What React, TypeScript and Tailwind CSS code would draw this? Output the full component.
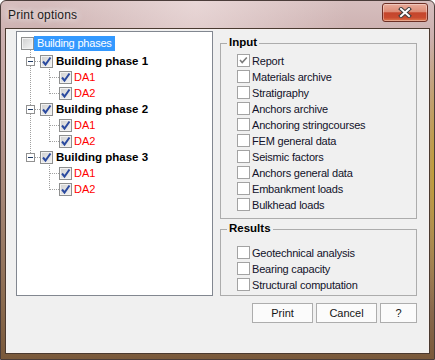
import React from "react";

function TreeCheck({ checked }: { checked: boolean }) {
  return (
    <span className="mt-[2px] flex h-[13px] w-[13px] shrink-0 items-center justify-center border border-[#8e8f8f] bg-[linear-gradient(135deg,#cfcfcf,#f5f5f5)] shadow-[inset_0_0_0_1px_#f2f2f2]">
      {checked && (
        <svg width="11" height="11" viewBox="0 0 11 11">
          <path d="M2 5.5 L4.5 8.5 L9.5 1.5" fill="none" stroke="#2b4a9f" strokeWidth="2" />
        </svg>
      )}
    </span>
  );
}

function Check({ checked }: { checked?: boolean }) {
  return (
    <span className="mt-[1px] flex h-[13px] w-[13px] shrink-0 items-center justify-center border border-[#a3a3a3] bg-white">
      {checked && (
        <svg width="11" height="11" viewBox="0 0 11 11">
          <path d="M2 5 L4.2 7.5 L8.8 2.5" fill="none" stroke="#7b7b7b" strokeWidth="1.6" />
        </svg>
      )}
    </span>
  );
}

function CheckRow({ label, checked }: { label: string; checked?: boolean }) {
  return (
    <div className="flex h-[16px] items-start">
      <Check checked={checked} />
      <span className="ml-[2px] whitespace-nowrap text-[11px] leading-[16px] tracking-[-0.2px] text-[#12122a]">{label}</span>
    </div>
  );
}

const phases = [29, 77, 125];

function Tree() {
  const dot = { stroke: "#a0a0a0", strokeDasharray: "1 1" };
  return (
    <div className="relative h-[265px] w-[197px] shrink-0 border border-[#828790] bg-white pt-[3px]">
      <svg className="absolute left-0 top-0" width="195" height="263" shapeRendering="crispEdges">
        <path d="M13.5 18 V125" {...dot} />
        {phases.map((c) => (
          <g key={c}>
            <path d={`M18 ${c + 0.5} H23`} {...dot} />
            <path d={`M32.5 ${c + 8} V${c + 33}`} {...dot} />
            <path d={`M33 ${c + 16.5} H42`} {...dot} />
            <path d={`M33 ${c + 32.5} H42`} {...dot} />
            <rect x="9.5" y={c - 3.5} width="8" height="8" fill="#ffffff" stroke="#919191" />
            <path d={`M11 ${c + 0.5} H16`} stroke="#1f3a63" />
          </g>
        ))}
      </svg>
      <div className="flex h-[16px] items-start pl-[4px]">
        <TreeCheck checked={false} />
        <span className="mt-[1px] h-[15px] whitespace-nowrap bg-[#3399ff] pl-[3px] pr-[3px] text-[11px] leading-[15px] tracking-[-0.2px] text-white">
          Building phases
        </span>
      </div>
      <div className="mt-[2px]">
        {[1, 2, 3].map((n) => (
          <div key={n}>
            <div className="flex h-[16px] items-start pl-[23px]">
              <TreeCheck checked />
              <span className="ml-[3px] whitespace-nowrap text-[11.5px] font-bold leading-[16px] text-black">
                Building phase {n}
              </span>
            </div>
            <div className="flex h-[16px] items-start pl-[42px]">
              <TreeCheck checked />
              <span className="ml-[2px] text-[11px] leading-[16px] text-[#ff0000]">DA1</span>
            </div>
            <div className="flex h-[16px] items-start pl-[42px]">
              <TreeCheck checked />
              <span className="ml-[2px] text-[11px] leading-[16px] text-[#ff0000]">DA2</span>
            </div>
          </div>
        ))}
      </div>
    </div>
  );
}

export default function App() {
  return (
    <div className="h-[360px] w-[435px] font-['Liberation_Sans',Arial,sans-serif]">
      <div className="flex h-[360px] w-[435px] flex-col rounded-t-[6px] border border-[#4b3d3a] bg-[radial-gradient(10px_140px_at_100%_48%,rgba(196,160,48,0.95),transparent),radial-gradient(ellipse_at_45%_0%,rgba(255,245,245,0.45),transparent_45%),linear-gradient(180deg,#d6bebe_0%,#cdb1b0_9%,#b99a94_35%,#a0816f_60%,#8a6a4e_85%,#7a593b_100%)]">
        <div className="flex h-[27px] shrink-0 items-start justify-between">
          <span className="ml-[7px] mt-[7px] whitespace-nowrap text-[12px] leading-[15px] tracking-[0.2px] text-[#1b1b1b] [text-shadow:0_0_6px_rgba(255,255,255,0.9),0_0_10px_rgba(255,255,255,0.6)]">
            Print options
          </span>
          <div className="mr-[6px] mt-[2px] flex h-[19px] w-[46px] items-center justify-center rounded-[3px] border border-[#6e2f25] bg-[linear-gradient(180deg,#e9ab9a_0%,#dd8c76_45%,#c4452c_52%,#c94b2f_80%,#e0794f_100%)] shadow-[inset_0_0_0_1px_rgba(255,255,255,0.35)]">
            <svg width="14" height="11" viewBox="0 0 14 11">
              <path d="M3 2 L11 9 M11 2 L3 9" stroke="#3c3c3c" strokeWidth="4" strokeLinecap="square" />
              <path d="M3 2 L11 9 M11 2 L3 9" stroke="#ffffff" strokeWidth="2" strokeLinecap="square" />
            </svg>
          </div>
        </div>
        <div className="mx-[4px] border border-[#4a3a30]">
          <div className="border border-[#f6f0ee]">
            <div className="h-[322px] bg-[#f0f0f0] pl-[9px] pr-[11px] pt-[1px]">
              <div className="flex">
                <Tree />
                <div className="ml-[7px] w-[197px] pt-[12px]">
                  <div className="relative h-[176px] border border-[#acacac] pl-[16px] pt-[9px]">
                    <span className="absolute left-[6px] top-[-8px] bg-[#f0f0f0] px-[2px] text-[11.5px] font-bold leading-[13px] text-black">
                      Input
                    </span>
                    <CheckRow label="Report" checked />
                    <CheckRow label="Materials archive" />
                    <CheckRow label="Stratigraphy" />
                    <CheckRow label="Anchors archive" />
                    <CheckRow label="Anchoring stringcourses" />
                    <CheckRow label="FEM general data" />
                    <CheckRow label="Seismic factors" />
                    <CheckRow label="Anchors general data" />
                    <CheckRow label="Embankment loads" />
                    <CheckRow label="Bulkhead loads" />
                  </div>
                  <div className="relative mt-[10px] h-[67px] border border-[#acacac] pl-[16px] pt-[15px]">
                    <span className="absolute left-[6px] top-[-8px] bg-[#f0f0f0] px-[2px] text-[11.5px] font-bold leading-[13px] text-black">
                      Results
                    </span>
                    <CheckRow label="Geotechnical analysis" />
                    <CheckRow label="Bearing capacity" />
                    <CheckRow label="Structural computation" />
                  </div>
                </div>
              </div>
              <div className="mt-[7px] flex justify-end gap-[3px]">
                <button className="h-[20px] w-[61px] border border-[#adadad] bg-[#fbfbfb] text-[11px] leading-[18px] text-[#151515]">Print</button>
                <button className="h-[20px] w-[61px] border border-[#adadad] bg-[#fbfbfb] text-[11px] leading-[18px] text-[#151515]">Cancel</button>
                <button className="h-[20px] w-[37px] border border-[#adadad] bg-[#fbfbfb] text-[11px] leading-[18px] text-[#151515]">?</button>
              </div>
            </div>
          </div>
        </div>
      </div>
    </div>
  );
}
